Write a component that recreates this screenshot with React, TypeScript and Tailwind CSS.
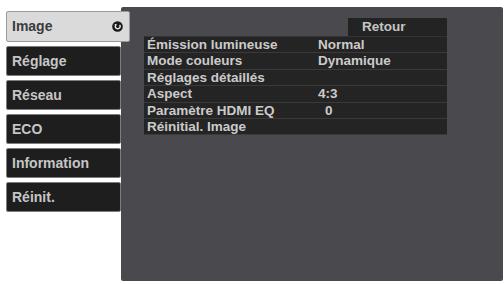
import React from "react";

const MENU = ["Image", "Réglage", "Réseau", "ECO", "Information", "Réinit."];

const ROWS: { label: string; value?: string; indent?: boolean }[] = [
  { label: "Émission lumineuse", value: "Normal" },
  { label: "Mode couleurs", value: "Dynamique" },
  { label: "Réglages détaillés" },
  { label: "Aspect", value: "4:3" },
  { label: "Paramètre HDMI EQ", value: "0", indent: true },
  { label: "Réinitial. Image" },
];

function EnterIcon() {
  return (
    <svg width="11" height="11" viewBox="0 0 12 12" aria-hidden>
      <circle cx="6" cy="6" r="5.8" fill="#1a1a1a" />
      <path
        d="M8.3 4.2 A2.6 2.6 0 1 1 4.1 4.4"
        fill="none"
        stroke="#e6e6e6"
        strokeWidth="1.5"
      />
      <path d="M2.6 3.2 L5.2 3.4 L4.4 5.8 Z" fill="#e6e6e6" />
    </svg>
  );
}

export default function App() {
  return (
    <div
      className="w-[504px] h-[284px] bg-white flex overflow-hidden antialiased"
      style={{ fontFamily: "'Liberation Sans', Arial, sans-serif" }}
    >
      {/* Left menu */}
      <div className="w-[121px] shrink-0 pl-[6px] pt-[11px] flex flex-col gap-[4px]">
        {MENU.map((m, i) =>
          i === 0 ? (
            <div
              key={m}
              className="relative z-10 w-[124px] h-[31px] rounded-[2px] border border-[#9a9a9a] bg-[#dadada] flex items-center justify-between pl-[5px] pr-[6px] text-[14px] font-bold text-[#3a3a3a]"
            >
              <span>{m}</span>
              <EnterIcon />
            </div>
          ) : (
            <div
              key={m}
              className="w-[115px] h-[30px] rounded-[2px] border border-[#7d7d7d] bg-[#1e1e1e] flex items-center pl-[5px] text-[14px] font-bold text-[#c6c6c6]"
            >
              {m}
            </div>
          )
        )}
      </div>

      {/* Right panel */}
      <div className="mt-[7px] w-[382px] h-[274px] bg-[#4a4a4e] rounded-[2px] pl-[23px] pt-[11px]">
        <div className="w-[303px]">
          <div className="flex justify-end">
            <div className="w-[99px] h-[18px] bg-[#232323] pl-[14px] text-[13.5px] font-bold leading-[18px] text-[#c4c4c4]">
              Retour
            </div>
          </div>
          <div className="bg-[#242424] border-t border-[#333]">
            {ROWS.map((r) => (
              <div
                key={r.label}
                className="h-[16.4px] flex items-center border-b border-[#3a3a3a] text-[13.5px] font-bold text-[#cbcbcb] leading-none"
              >
                <span className="w-[174px] pl-[3px] shrink-0">{r.label}</span>
                <span className={r.indent ? "pl-[7px]" : ""}>{r.value}</span>
              </div>
            ))}
          </div>
        </div>
      </div>
    </div>
  );
}
